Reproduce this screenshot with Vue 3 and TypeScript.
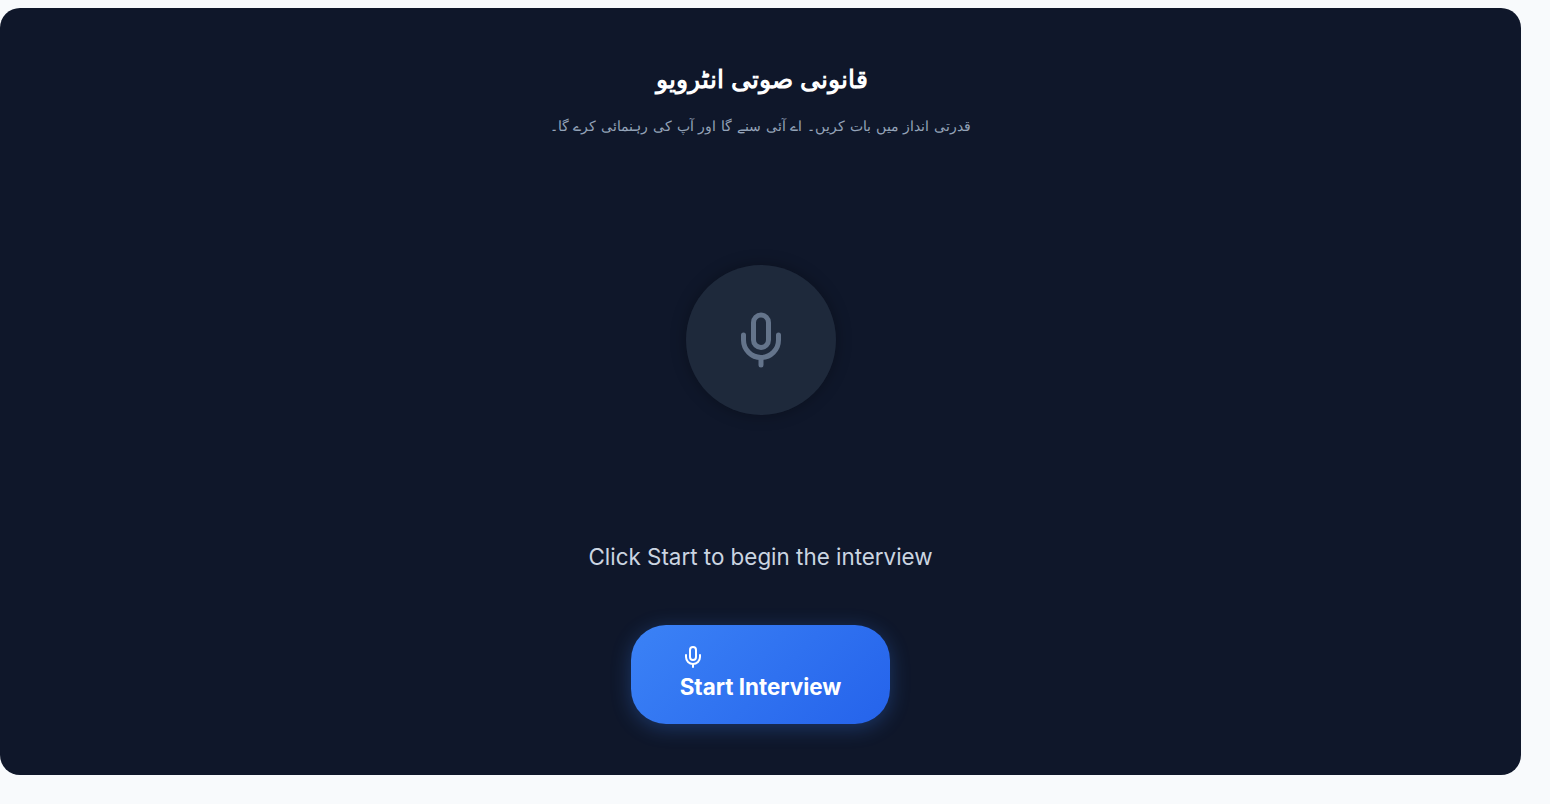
<script setup lang="ts">
const title = 'قانونی صوتی انٹرویو'
const subtitle = 'قدرتی انداز میں بات کریں۔ اے آئی سنے گا اور آپ کی رہنمائی کرے گا۔'
</script>

<template>
  <main class="page">
    <section class="card">
      <header class="head">
        <h1 class="title" dir="rtl">{{ title }}</h1>
        <p class="subtitle" dir="rtl">{{ subtitle }}</p>
      </header>
      <div class="orb">
        <svg class="orb-icon" viewBox="0 0 24 24" fill="none" stroke="currentColor" stroke-width="2" stroke-linecap="round" stroke-linejoin="round">
          <path d="M12 2a3 3 0 0 0-3 3v7a3 3 0 0 0 6 0V5a3 3 0 0 0-3-3Z" />
          <path d="M19 10v2a7 7 0 0 1-14 0v-2" />
          <line x1="12" y1="19" x2="12" y2="22" />
        </svg>
      </div>
      <p class="status">Click Start to begin the interview</p>
      <button class="start" type="button">
        <svg class="start-icon" viewBox="0 0 24 24" fill="none" stroke="currentColor" stroke-width="2" stroke-linecap="round" stroke-linejoin="round">
          <path d="M12 2a3 3 0 0 0-3 3v7a3 3 0 0 0 6 0V5a3 3 0 0 0-3-3Z" />
          <path d="M19 10v2a7 7 0 0 1-14 0v-2" />
          <line x1="12" y1="19" x2="12" y2="22" />
        </svg>
        <span class="start-label">Start Interview</span>
      </button>
    </section>
  </main>
</template>

<style>
html, body { margin: 0; background: #f8fafc; }
</style>

<style scoped>
.page {
  height: 804px;
  box-sizing: border-box;
  padding: 8px 29px 29px 0;
  background: #f8fafc;
  font-family: Inter, "Liberation Sans", sans-serif;
}
.card {
  height: 100%;
  box-sizing: border-box;
  border-radius: 20px;
  background: #0f172a;
  display: flex;
  flex-direction: column;
  align-items: center;
  padding-top: 55px;
}
.head { text-align: center; }
.title {
  margin: 0;
  padding-left: 3px;
  font-size: 25.3px;
  line-height: 32px;
  font-weight: 700;
  font-family: "Liberation Sans", sans-serif;
  color: #ffffff;
}
.subtitle {
  margin: 21px 0 0;
  font-size: 14.4px;
  word-spacing: 0.75px;
  line-height: 20px;
  font-family: "Liberation Sans", sans-serif;
  color: #94a3b8;
}
.orb {
  margin-top: 129px;
  width: 150px;
  height: 150px;
  border-radius: 50%;
  background: #1e293b;
  color: #64748b;
  box-shadow: 0 0 16px rgba(0, 0, 0, 0.3);
  display: flex;
  align-items: center;
  justify-content: center;
}
.orb-icon { width: 60px; height: 60px; display: block; }
.status {
  margin: 127px 0 0;
  font-size: 22.4px;
  line-height: 30px;
  color: #cbd5e1;
}
.start {
  margin-top: 53px;
  padding: 20px 48.6px;
  border: 0;
  border-radius: 35px;
  background: linear-gradient(135deg, #3b82f6, #2563eb);
  color: #ffffff;
  box-shadow: 0 4px 20px rgba(59, 130, 246, 0.3);
  display: flex;
  flex-direction: column;
  align-items: flex-start;
  font-family: inherit;
}
.start-icon { width: 24px; height: 24px; display: block; margin-left: 1.5px; }
.start-label {
  font-size: 22.4px;
  line-height: 35px;
  font-weight: 700;
  white-space: nowrap;
}
</style>
